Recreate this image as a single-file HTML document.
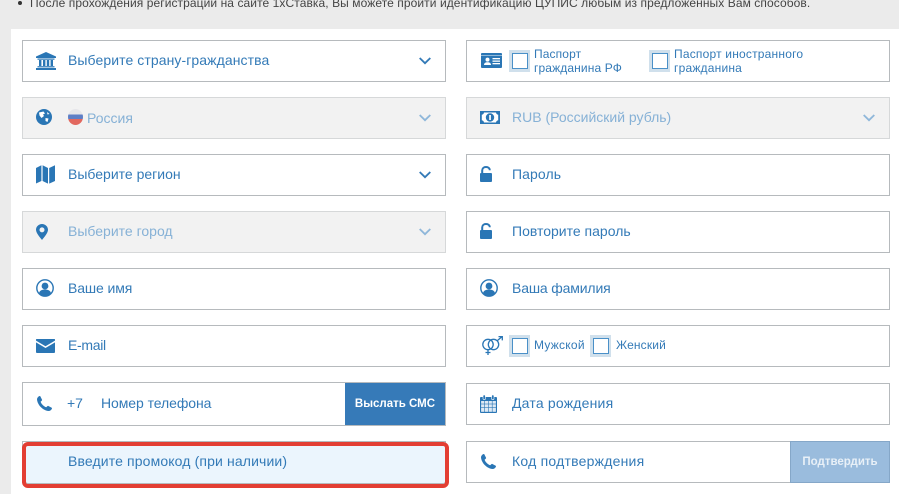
<!DOCTYPE html>
<html><head><meta charset="utf-8">
<style>
html,body{margin:0;padding:0}
body{width:899px;height:494px;position:relative;overflow:hidden;background:#ebebeb;font-family:"Liberation Sans",sans-serif;color:#337ab7}
.panel{position:absolute;left:11px;top:29px;width:888px;height:465px;background:#fff}
.f{position:absolute;box-sizing:border-box;width:424px;height:42px;border:1px solid #b6babd;background:#fff}
.d{background:#f2f2f2;border-color:#d6d8d9}
.l{left:22px}.r{left:466px}
.t{position:absolute;font-size:14px;line-height:16px;white-space:nowrap;color:#337ab7}
.m{color:#86b1d6}
.s{position:absolute;font-size:12px;line-height:14px;white-space:nowrap;color:#337ab7}
svg{position:absolute;overflow:visible}
.cb{position:absolute;width:21px;height:22px;background:#d0e0ec}
.cb i{position:absolute;left:3px;top:3px;width:14px;height:14px;border:1px solid #4a90c8;background:#fff;display:block}
.btn{position:absolute;font-weight:bold;font-size:11.5px;color:#fff;text-align:center;line-height:42px}
</style></head><body>
<div style="position:absolute;left:18px;top:1px;width:4px;height:4px;border-radius:50%;background:#333"></div>
<div style="position:absolute;left:30px;top:-4px;font-size:12px;line-height:14px;letter-spacing:.08px;color:#444;white-space:nowrap">После прохождения регистрации на сайте 1хСтавка, Вы можете пройти идентификацию ЦУПИС любым из предложенных Вам способов.</div>
<div class="panel"></div>

<div class="f l" style="top:40px"></div>
<div class="f r" style="top:40px"></div>
<div class="f l d" style="top:97px"></div>
<div class="f r d" style="top:97px"></div>
<div class="f l" style="top:154px"></div>
<div class="f r" style="top:154px"></div>
<div class="f l d" style="top:211px"></div>
<div class="f r" style="top:211px"></div>
<div class="f l" style="top:268px"></div>
<div class="f r" style="top:268px"></div>
<div class="f l" style="top:325px"></div>
<div class="f r" style="top:325px"></div>
<div class="f l" style="top:382px;height:44px"></div>
<div class="f r" style="top:383px"></div>
<div class="f l" style="top:441px"></div>
<div class="f r" style="top:441px"></div>

<!-- Left icons -->
<svg style="left:36px;top:52px" width="20" height="18" viewBox="0 0 20 18" fill="#2a76b5"><path d="M10 0L20 4.5V6H0V4.5z"/><rect x="1.5" y="6.5" width="17" height="1.2"/><rect x="3" y="8" width="2.4" height="6"/><rect x="7" y="8" width="2.4" height="6"/><rect x="10.8" y="8" width="2.4" height="6"/><rect x="14.6" y="8" width="2.4" height="6"/><rect x="1.5" y="14.2" width="17" height="1.2"/><rect x="0" y="16" width="20" height="2"/></svg>
<svg style="left:36px;top:109px" width="16" height="16" viewBox="0 0 16 16"><circle cx="8" cy="8" r="8" fill="#2a76b5"/><path d="M3 3.5L7.5 2.5L9 4.5L7 5.5L8 7L5.5 9L3.5 6.5zM9.5 9L12.5 9.5L11.5 13L9.5 12zM11 3L13.5 5L11.5 5.5z" fill="#fff"/></svg>
<div style="position:absolute;left:68px;top:109px;width:15px;height:16px;border-radius:50%;background:linear-gradient(#e6e6ea 0,#e6e6ea 33%,#5e7fc6 33%,#5e7fc6 62%,#e2685f 62%,#e2685f 100%)"></div>
<svg style="left:36px;top:165px" width="19" height="19" viewBox="0 0 19 19" fill="#2a76b5"><path d="M0 3L5.4 0.3V16L0 18.5zM6.6 0.3L12 3V18.6L6.6 16zM13.2 3L19 0.3V16L13.2 18.6z"/></svg>
<svg style="left:36px;top:224px" width="12" height="16" viewBox="0 0 12 16"><path fill-rule="evenodd" fill="#2a76b5" d="M6 0C2.7 0 0 2.6 0 5.8C0 9 4 13.5 6 16C8 13.5 12 9 12 5.8C12 2.6 9.3 0 6 0zM6 3.4A2.5 2.5 0 1 1 6 8.4A2.5 2.5 0 1 1 6 3.4z"/></svg>
<svg style="left:36px;top:279px" width="18" height="18" viewBox="0 0 18 18"><circle cx="9" cy="9" r="8.2" fill="#fff" stroke="#2a76b5" stroke-width="1.4"/><circle cx="9" cy="7" r="3.4" fill="#2a76b5"/><path d="M3 14.2C3.5 11.5 6 10.5 9 10.5C12 10.5 14.5 11.5 15 14.2C13.5 16.2 11.3 17.2 9 17.2C6.7 17.2 4.5 16.2 3 14.2z" fill="#2a76b5"/></svg>
<svg style="left:36px;top:339px" width="19" height="14" viewBox="0 0 19 14" fill="#2a76b5"><path d="M0.5 0H18.5C18.9 0 19 .4 19 .8V1.6L9.5 7.2L0 1.6V.8C0 .4 .2 0 .5 0z"/><path d="M0 3.4L9.5 9L19 3.4V13C19 13.6 18.6 14 18 14H1C.4 14 0 13.6 0 13z"/></svg>
<svg style="left:37px;top:396px" width="15" height="15" viewBox="0 0 15 15"><path fill="#2a76b5" d="M3.3 0.2L5 3.6C5.2 4 5 4.4 4.7 4.7L3.6 5.7C4.3 7.8 6.5 10.2 9.2 11.3L10.3 10.2C10.6 9.9 11 9.8 11.4 10L14.7 11.8C15 12 15 12.4 14.9 12.7C14.4 14 13 15 11.5 15C6 14.6 .5 9 0 3.5C0 2 1 .6 2.3 .1C2.7 0 3.1 0 3.3 .2z"/></svg>

<!-- Left text -->
<div class="t" style="left:68px;top:52px;letter-spacing:.08px">Выберите страну-гражданства</div>
<div class="t m" style="left:87px;top:110px">Россия</div>
<div class="t" style="left:68px;top:166px">Выберите регион</div>
<div class="t m" style="left:68px;top:223px">Выберите город</div>
<div class="t" style="left:68px;top:280px;letter-spacing:-.1px">Ваше имя</div>
<div class="t" style="left:68px;top:337px;letter-spacing:-.3px">E-mail</div>
<div class="t" style="left:67px;top:395px">+7</div>
<div class="t" style="left:101px;top:395px;letter-spacing:-.07px">Номер телефона</div>
<div class="btn" style="left:345px;top:383px;width:100px;height:42px;background:#367ab8">Выслать СМС</div>

<!-- Chevrons -->
<svg style="left:419px;top:57px" width="12" height="8" fill="none" stroke="#337ab7" stroke-width="1.8"><path d="M.7 1L6 6.2L11.3 1"/></svg>
<svg style="left:419px;top:114px" width="12" height="8" fill="none" stroke="#8fb7da" stroke-width="1.8"><path d="M.7 1L6 6.2L11.3 1"/></svg>
<svg style="left:419px;top:171px" width="12" height="8" fill="none" stroke="#337ab7" stroke-width="1.8"><path d="M.7 1L6 6.2L11.3 1"/></svg>
<svg style="left:419px;top:228px" width="12" height="8" fill="none" stroke="#8fb7da" stroke-width="1.8"><path d="M.7 1L6 6.2L11.3 1"/></svg>
<svg style="left:863px;top:114px" width="12" height="8" fill="none" stroke="#8fb7da" stroke-width="1.8"><path d="M.7 1L6 6.2L11.3 1"/></svg>

<!-- Promo -->
<div style="position:absolute;left:22px;top:441.5px;width:427px;height:46.5px;box-sizing:border-box;border:4.5px solid #e33e33;border-radius:6px;background:#ebf5fd;box-shadow:inset 0 -1px 0 #b6babd"></div>
<div class="t" style="left:68px;top:453px;letter-spacing:.13px">Введите промокод (при наличии)</div>

<!-- Right icons -->
<svg style="left:481px;top:53px" width="21" height="15" viewBox="0 0 21 15"><rect width="21" height="15" rx="1" fill="#2a76b5"/><rect x="0" y="2" width="21" height=".8" fill="#fff" opacity=".6"/><circle cx="6.5" cy="6.6" r="2" fill="#fff"/><path d="M3 12C3 10 4.5 9.2 6.5 9.2S10 10 10 12z" fill="#fff"/><rect x="11.5" y="5" width="7.5" height="1.3" fill="#fff"/><rect x="11.5" y="7.5" width="7.5" height="1.3" fill="#fff"/><rect x="11.5" y="10" width="7.5" height="1.3" fill="#fff"/></svg>
<svg style="left:480px;top:111px" width="20" height="13" viewBox="0 0 20 13"><rect width="20" height="13" fill="#2a76b5"/><path d="M4 1.5H16C16.2 2.8 17 3.5 18.2 3.7V9.3C17 9.5 16.2 10.2 16 11.5H4C3.8 10.2 3 9.5 1.8 9.3V3.7C3 3.5 3.8 2.8 4 1.5z" fill="#fff"/><circle cx="10" cy="6.5" r="4.2" fill="#2a76b5"/><rect x="9.2" y="4" width="1.7" height="5" fill="#fff"/></svg>
<svg style="left:480px;top:166px" width="12" height="16" viewBox="0 0 12 16"><path fill="none" stroke="#2a76b5" stroke-width="2" d="M2.2 7.5V4.5C2.2 2.4 3.8 1 6 1S9.8 2.4 9.8 4.2"/><rect y="7" width="12" height="9" rx="1" fill="#2a76b5"/></svg>
<svg style="left:480px;top:223px" width="12" height="16" viewBox="0 0 12 16"><path fill="none" stroke="#2a76b5" stroke-width="2" d="M2.2 7.5V4.5C2.2 2.4 3.8 1 6 1S9.8 2.4 9.8 4.2"/><rect y="7" width="12" height="9" rx="1" fill="#2a76b5"/></svg>
<svg style="left:480px;top:279px" width="18" height="18" viewBox="0 0 18 18"><circle cx="9" cy="9" r="8.2" fill="#fff" stroke="#2a76b5" stroke-width="1.4"/><circle cx="9" cy="7" r="3.4" fill="#2a76b5"/><path d="M3 14.2C3.5 11.5 6 10.5 9 10.5C12 10.5 14.5 11.5 15 14.2C13.5 16.2 11.3 17.2 9 17.2C6.7 17.2 4.5 16.2 3 14.2z" fill="#2a76b5"/></svg>
<svg style="left:482px;top:336px" width="21" height="19" viewBox="0 0 21 19" fill="none" stroke="#2a76b5" stroke-width="1.3"><circle cx="6" cy="8.5" r="5.2"/><circle cx="11.5" cy="8.5" r="5.2"/><path d="M6 13.7V19M3.5 16.5H8.5M15.2 4.8L20 .6M16.5 .6H20.3V4.4"/></svg>
<svg style="left:480px;top:395px" width="17" height="18" viewBox="0 0 17 18"><rect x="0" y="2" width="17" height="16" rx="1" fill="#2a76b5"/><rect x="3" y="0" width="2.4" height="4.6" rx="1" fill="#2a76b5" stroke="#fff" stroke-width=".6"/><rect x="11.6" y="0" width="2.4" height="4.6" rx="1" fill="#2a76b5" stroke="#fff" stroke-width=".6"/><g fill="#dde9f4"><rect x="1.1" y="6" width="3.2" height="2.7"/><rect x="4.9" y="6" width="3.2" height="2.7"/><rect x="8.7" y="6" width="3.2" height="2.7"/><rect x="12.5" y="6" width="3.4" height="2.7"/><rect x="1.1" y="9.3" width="3.2" height="2.7"/><rect x="4.9" y="9.3" width="3.2" height="2.7"/><rect x="8.7" y="9.3" width="3.2" height="2.7"/><rect x="12.5" y="9.3" width="3.4" height="2.7"/><rect x="1.1" y="12.6" width="3.2" height="4.2"/><rect x="4.9" y="12.6" width="3.2" height="4.2"/><rect x="8.7" y="12.6" width="3.2" height="4.2"/><rect x="12.5" y="12.6" width="3.4" height="4.2"/></g></svg>
<svg style="left:481px;top:454px" width="15" height="15" viewBox="0 0 15 15"><path fill="#2a76b5" d="M3.3 0.2L5 3.6C5.2 4 5 4.4 4.7 4.7L3.6 5.7C4.3 7.8 6.5 10.2 9.2 11.3L10.3 10.2C10.6 9.9 11 9.8 11.4 10L14.7 11.8C15 12 15 12.4 14.9 12.7C14.4 14 13 15 11.5 15C6 14.6 .5 9 0 3.5C0 2 1 .6 2.3 .1C2.7 0 3.1 0 3.3 .2z"/></svg>

<!-- Checkboxes -->
<div class="cb" style="left:509px;top:50px"><i></i></div>
<div class="cb" style="left:649px;top:50px"><i></i></div>
<div class="cb" style="left:509px;top:335px"><i></i></div>
<div class="cb" style="left:590px;top:335px"><i></i></div>

<!-- Right text -->
<div class="s" style="left:534px;top:47px;letter-spacing:.12px">Паспорт<br>гражданина РФ</div>
<div class="s" style="left:674px;top:47px;letter-spacing:.2px">Паспорт иностранного<br>гражданина</div>
<div class="t m" style="left:512px;top:109px">RUB (Российский рубль)</div>
<div class="t" style="left:512px;top:166px;letter-spacing:.1px">Пароль</div>
<div class="t" style="left:512px;top:223px">Повторите пароль</div>
<div class="t" style="left:512px;top:280px;letter-spacing:-.15px">Ваша фамилия</div>
<div class="s" style="left:534px;top:338px;letter-spacing:.25px">Мужской</div>
<div class="s" style="left:616px;top:338px;letter-spacing:.15px">Женский</div>
<div class="t" style="left:512px;top:395px;letter-spacing:.2px">Дата рождения</div>
<div class="t" style="left:512px;top:453px;letter-spacing:.22px">Код подтверждения</div>
<div class="btn" style="left:790px;top:441px;width:100px;height:42px;box-sizing:border-box;background:#9abcdd;border:1px solid #85a7c8;line-height:40px;color:#e8f0f7">Подтвердить</div>
</body></html>
